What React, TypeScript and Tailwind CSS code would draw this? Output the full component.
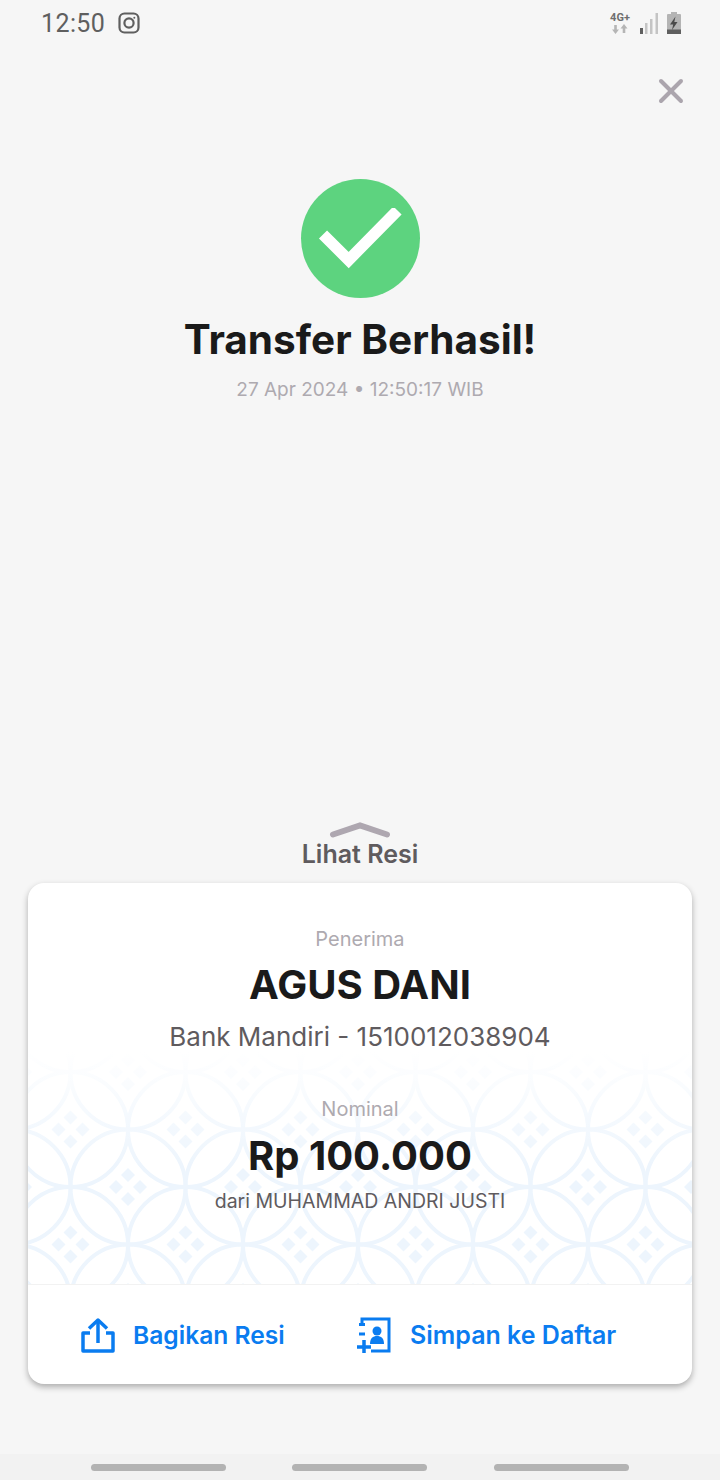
import { X } from "lucide-react";

const font = "font-['Inter','Liberation_Sans',sans-serif]";

// centres of the four-diamond clusters inside one pattern tile
const clusters = [
  [0, 0],
  [115, 0],
  [57.5, 57.5],
  [0, 115],
  [115, 115],
];
const offsets = [
  [0, -12],
  [0, 12],
  [-12, 0],
  [12, 0],
];

function BatikPattern() {
  return (
    <svg className="absolute left-0 right-0 bottom-0 h-[232px] w-full" aria-hidden="true">
      <defs>
        <pattern id="kawung" x="-15" y="20" width="115" height="115" patternUnits="userSpaceOnUse">
          <g fill="none" stroke="#edf5fd" strokeWidth="4">
            {clusters.map(([cx, cy]) => (
              <circle key={`${cx}-${cy}`} cx={cx} cy={cy} r="57.5" />
            ))}
          </g>
          <g fill="#edf5fd">
            {clusters.flatMap(([cx, cy]) =>
              offsets.map(([dx, dy]) => (
                <path key={`${cx}-${cy}-${dx}-${dy}`} d={`M${cx + dx} ${cy + dy - 7}l7 7-7 7-7-7z`} />
              ))
            )}
          </g>
        </pattern>
        <linearGradient id="fade" x1="0" y1="0" x2="0" y2="1">
          <stop offset="0" stopColor="#fff" stopOpacity="1" />
          <stop offset="0.5" stopColor="#fff" stopOpacity="0" />
        </linearGradient>
      </defs>
      <rect width="100%" height="100%" fill="url(#kawung)" />
      <rect width="100%" height="100%" fill="url(#fade)" />
    </svg>
  );
}

function StatusBar() {
  return (
    <div className="h-[46px] flex items-center justify-between pl-[41px] pr-[39px]">
      <div className="flex items-center gap-[13px] text-[#5f5f5f]">
        <span className="font-['Roboto',sans-serif] text-[25px] leading-none tracking-[0.4px]">12:50</span>
        <svg width="22" height="22" viewBox="0 0 22 22" fill="none" stroke="currentColor" strokeWidth="2.200">
          <rect x="1.500" y="1.500" width="19" height="19" rx="5" />
          <circle cx="11" cy="11" r="4.600" />
          <circle cx="16.300" cy="5.700" r="1" fill="currentColor" stroke="none" />
        </svg>
      </div>
      <div className="flex items-center gap-[9px]">
        <div className="flex flex-col items-center w-[22px]">
          <span className="font-['Roboto',sans-serif] font-bold text-[11px] leading-[12px] text-[#6e6e6e]">4G+</span>
          <svg width="16" height="10" viewBox="0 0 16 10" fill="#b5b5b5">
            <path d="M3.500 10L0 5.500h2.200V1h2.600v4.500H7z" />
            <path d="M12 0l3.500 4.500h-2.200V9h-2.600V4.500H8.500z" />
          </svg>
        </div>
        <svg width="18" height="21" viewBox="0 0 18 21">
          <rect x="0" y="15" width="3" height="6" fill="#5f5f5f" />
          <rect x="5" y="10" width="2.500" height="11" fill="#c4c4c4" />
          <rect x="10" y="6" width="2.500" height="15" fill="#c4c4c4" />
          <rect x="15.500" y="0" width="2.500" height="21" fill="#c4c4c4" />
        </svg>
        <svg width="14" height="22" viewBox="0 0 14 22">
          <path d="M4 0h6v2h3a1 1 0 0 1 1 1v19H0V3a1 1 0 0 1 1-1h3z" fill="#b4b4b4" />
          <rect x="0" y="17.500" width="14" height="4.500" fill="#5f5f5f" />
          <path d="M8.500 4.500L3 12.500h3.200L5 18l5.500-8H7.300z" fill="#4b4b4b" />
        </svg>
      </div>
    </div>
  );
}

export default function App() {
  return (
    <div className={`${font} w-[720px] h-[1480px] flex flex-col bg-[#f6f6f6] overflow-hidden`}>
      <StatusBar />

      {/* Close */}
      <div className="flex justify-end pr-[29px] pt-[25px]">
        <X className="w-[40px] h-[40px] text-[#aba5ad]" strokeWidth={2.400} />
      </div>

      {/* Success */}
      <div className="flex flex-col items-center pt-[68px]">
        <div className="w-[119px] h-[119px] rounded-full bg-[#5dd37f] flex items-center justify-center">
          <svg width="84" height="62" viewBox="0 0 84 62" fill="none" stroke="#fff" strokeWidth="11.500">
            <path d="M5 26.500L30.700 52 79.500 2.500" />
          </svg>
        </div>
        <h1 className="mt-[17px] text-[40.5px] leading-[50px] font-bold text-[#1a1a1a]">Transfer Berhasil!</h1>
        <p className="mt-[11px] text-[19px] leading-[28px] text-[#aeaab0]">27 Apr 2024 • 12:50:17 WIB</p>
      </div>

      <div className="flex-1" />

      {/* Lihat Resi */}
      <div className="flex flex-col items-center">
        <svg width="62" height="16" viewBox="0 0 62 16" fill="none" stroke="#aea7b0" strokeWidth="6" strokeLinecap="round">
          <path d="M4 12.500L31 3.500 58 12.500" />
        </svg>
        <span className="mt-[1px] text-[25px] leading-[30px] font-semibold text-[#5f5b5e]">Lihat Resi</span>
      </div>

      {/* Card */}
      <div className="mx-[28px] mt-[14px] h-[501px] bg-white rounded-[16px] shadow-[0_3px_6px_rgba(0,0,0,0.3)] overflow-hidden flex flex-col">
        <div className="relative h-[402px] flex flex-col items-center pt-[43px] border-b border-[#f2f2f2]">
          <BatikPattern />
          <div className="relative flex flex-col items-center">
            <span className="text-[20px] leading-[26px] text-[#aeaab0]">Penerima</span>
            <span className="mt-[8px] text-[40px] leading-[50px] font-bold text-[#1a1a1a]">AGUS DANI</span>
            <span className="mt-[9px] text-[26px] leading-[36px] text-[#5f5b5e]">Bank Mandiri - 1510012038904</span>
            <span className="mt-[41px] text-[20px] leading-[26px] text-[#aeaab0]">Nominal</span>
            <span className="mt-[9px] text-[40px] leading-[50px] font-bold text-[#1a1a1a]">Rp 100.000</span>
            <span className="mt-[6px] text-[19.5px] leading-[28px] text-[#5f5b5e]">dari MUHAMMAD ANDRI JUSTI</span>
          </div>
        </div>
        <div className="flex-1 flex items-center pl-[53px] text-[#0a7cf0]">
          <div className="flex items-center gap-[18px] w-[276px]">
            <svg width="34" height="36" viewBox="0 0 34 36" fill="none" stroke="currentColor" strokeWidth="3.500" strokeLinejoin="round">
              <path d="M9 16H2v18h30V16h-7" />
              <path d="M17 26V3" />
              <path d="M8 11.500L17 3l9 8.500" />
            </svg>
            <span className="pt-[2px] text-[24.6px] font-semibold leading-none">Bagikan Resi</span>
          </div>
          <div className="flex items-center gap-[19px]">
            <svg width="34" height="36" viewBox="0 0 34 36" fill="none">
              <path d="M5 7V2h27v32H14" stroke="currentColor" strokeWidth="3" />
              <path d="M2 7.500h6M2 17h6" stroke="currentColor" strokeWidth="3" />
              <path d="M0 30h14M7 23v13" stroke="currentColor" strokeWidth="3.500" />
              <circle cx="20" cy="14" r="4.500" fill="currentColor" />
              <path d="M13 27c0-6 3-8 7-8s7 2 7 8z" fill="currentColor" />
            </svg>
            <span className="pt-[2px] text-[25px] font-semibold leading-none">Simpan ke Daftar</span>
          </div>
        </div>
      </div>

      {/* Navigation bar */}
      <div className="mt-[70px] h-[26px] bg-[#f2f2f2] pl-[91px] flex items-center gap-[66px]">
        <div className="w-[135px] h-[7px] rounded-full bg-[#b3b3b3]" />
        <div className="w-[135px] h-[7px] rounded-full bg-[#b3b3b3]" />
        <div className="w-[135px] h-[7px] ml-px rounded-full bg-[#b3b3b3]" />
      </div>
    </div>
  );
}
